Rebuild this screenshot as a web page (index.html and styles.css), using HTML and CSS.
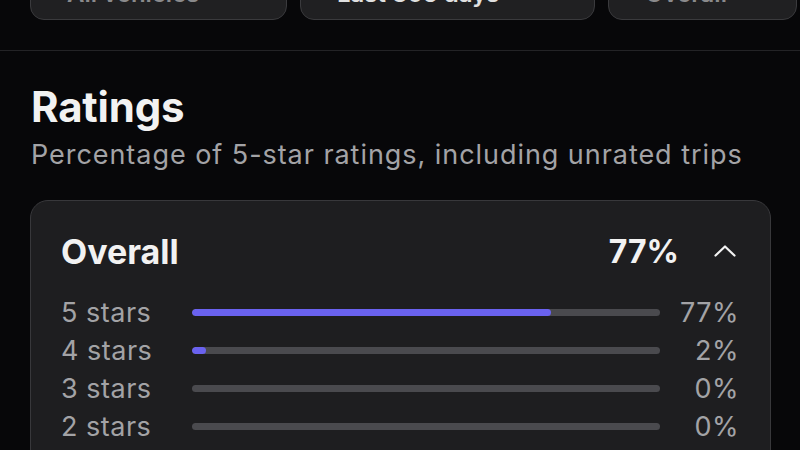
FILE: index.html
```html
<!DOCTYPE html>
<html lang="en">
<head>
    <meta charset="utf-8">
    <title>Ratings</title>
    <link rel="stylesheet" href="styles.css">
</head>
<body>
    <div class="filters">
        <div class="pill pill-vehicles">All vehicles</div>
        <div class="pill pill-days">Last 365 days</div>
        <div class="pill pill-overall">Overall</div>
    </div>

    <div class="section">
        <h2>Ratings</h2>
        <p class="sub">Percentage of 5-star ratings, including unrated trips</p>

        <div class="card">
            <div class="card-head">
                <span class="card-title">Overall</span>
                <span class="card-total">77%</span>
                <svg class="chevron" width="22" height="12" viewBox="0 0 22 12">
                    <path d="M1.5 10.5 L11 1.5 L20.5 10.5" fill="none" stroke="#f2f2f2" stroke-width="2.2" stroke-linecap="round" stroke-linejoin="round"/>
                </svg>
            </div>

            <div class="rows">
                <div class="row">
                    <span class="label">5 stars</span>
                    <div class="bar"><div class="fill" style="width: 76.7%"></div></div>
                    <span class="pct">77%</span>
                </div>
                <div class="row">
                    <span class="label">4 stars</span>
                    <div class="bar"><div class="fill" style="width: 3%"></div></div>
                    <span class="pct">2%</span>
                </div>
                <div class="row">
                    <span class="label">3 stars</span>
                    <div class="bar"></div>
                    <span class="pct">0%</span>
                </div>
                <div class="row">
                    <span class="label">2 stars</span>
                    <div class="bar"></div>
                    <span class="pct">0%</span>
                </div>
                <div class="row">
                    <span class="label">1 star</span>
                    <div class="bar"></div>
                    <span class="pct">0%</span>
                </div>
            </div>
        </div>
    </div>
</body>
</html>
```

FILE: styles.css
```css
body {
    margin: 0;
    background-color: #070709;
    font-family: Inter, "Noto Sans", sans-serif;
    color: #f2f2f2;
    overflow: hidden;
}
.filters {
    display: flex;
    gap: 13px;
    padding: 0 3px 30px 30px;
    margin-top: -40px;
    border-bottom: 1px solid #232326;
}
.pill {
    height: 60px;
    box-sizing: border-box;
    background-color: #202022;
    border: 1px solid #3a3a3d;
    border-radius: 14px;
    font-size: 24px;
    font-weight: 600;
    color: #e0e0e0;
    padding: 18px 36px 0 36px;
    display: flex;
    align-items: flex-start;
    white-space: nowrap;
}
.pill-vehicles {
    width: 257px;
    color: #8a8a8c;
}
.pill-days {
    width: 295px;
}
.pill-overall {
    flex: 1;
    color: #8a8a8c;
}
.section {
    padding: 0 29px 0 30px;
}
h2 {
    margin: 32px 0 0 1px;
    font-size: 42px;
    font-weight: 700;
    letter-spacing: -0.2px;
    line-height: 48px;
}
.sub {
    margin: 8px 0 0 1px;
    font-size: 27px;
    letter-spacing: 0.95px;
    color: #a3a3a6;
    line-height: 32px;
}
.card {
    margin-top: 29px;
    background-color: #1e1e20;
    border: 1px solid #38383b;
    border-radius: 18px;
    padding: 28px 31px 20px 30px;
    height: 300px;
}
.card-head {
    display: flex;
    align-items: center;
    height: 44px;
}
.card-title {
    font-size: 34px;
    font-weight: 700;
    flex: 1;
}
.card-total {
    font-size: 32px;
    font-weight: 700;
}
.chevron {
    margin-left: 35px;
    margin-right: 3px;
}
.rows {
    margin-top: 20px;
    display: flex;
    flex-direction: column;
}
.row {
    display: flex;
    align-items: center;
    height: 38px;
    font-size: 27px;
    letter-spacing: 0.5px;
    color: #a3a3a6;
}
.label {
    width: 131px;
}
.bar {
    width: 468px;
    height: 7px;
    border-radius: 4px;
    background-color: #4a4a4e;
    overflow: hidden;
}
.fill {
    height: 100%;
    border-radius: 4px;
    background-color: #6a62ef;
}
.pct {
    flex: 1;
    text-align: right;
}
```
